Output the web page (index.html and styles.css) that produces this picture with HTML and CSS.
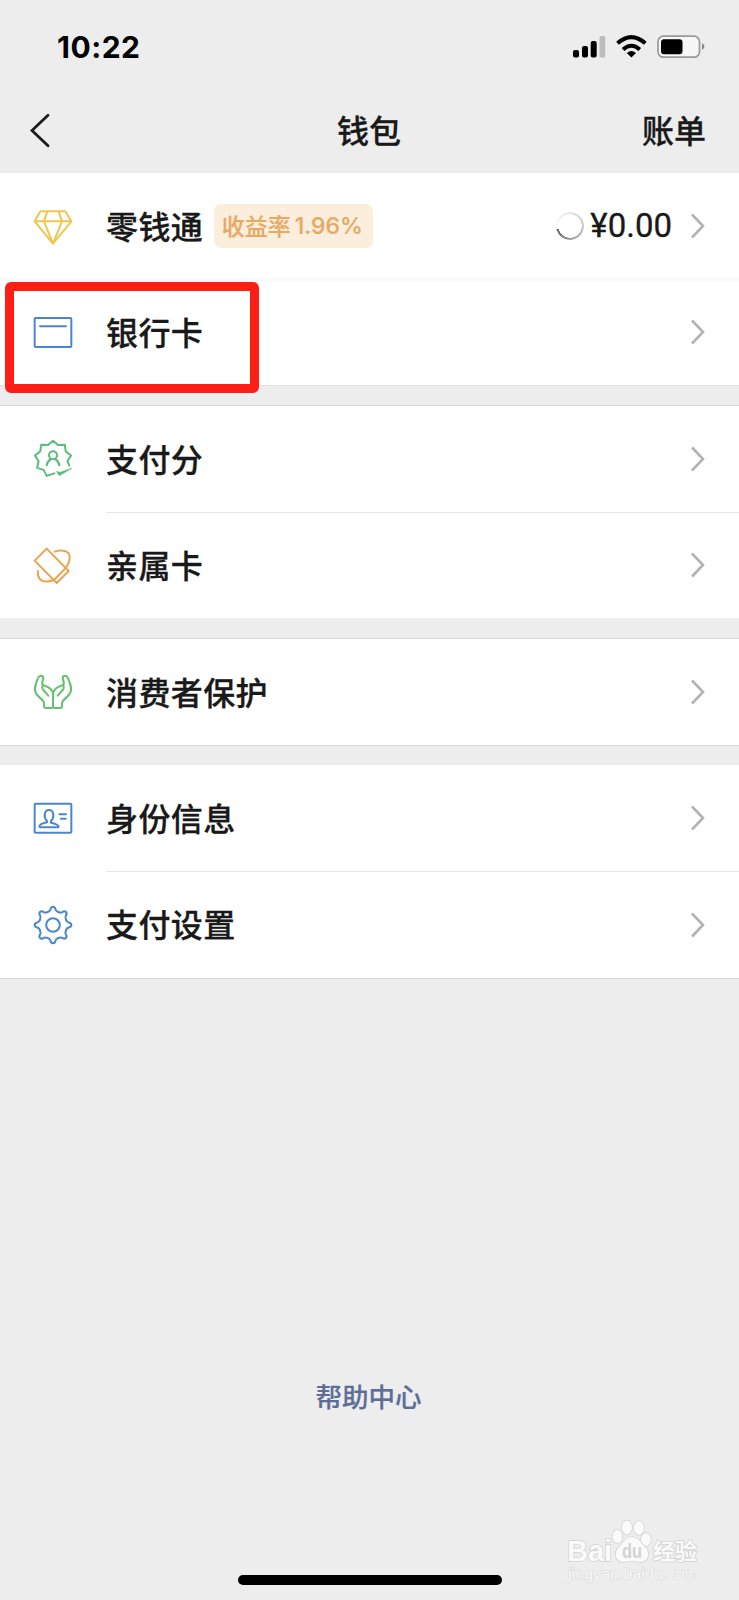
FILE: index.html
```html
<!DOCTYPE html>
<html lang="zh-CN">
<head>
<meta charset="utf-8">
<title>钱包</title>
<link rel="stylesheet" href="styles.css">
</head>
<body>
<svg class="defs" width="0" height="0">
  <symbol id="chevron" viewBox="0 0 16 28"><path d="M2 2.500 L13 14 L2 25.500" fill="none" stroke="#b2b2b2" stroke-width="2.600"/></symbol>
  <path id="tooth" d="M-16.1-38.8C-11.5-40.7-8.5-42-7.5-47C-6.5-53-5-55-0-55C5-55 6.5-53 7.5-47C8.5-42 11.5-40.7 16.1-38.8"/>
  <path id="hand" d="M31 20C31 9 19 9 15 18C8 36 2 49 8 62C13 76 34 82 33 95V103Q33 108 38 108H54Q60 108 60 102V66C60 50 44 45 33 40C26 42 26 48 31 54L46 71M31 20C27 28 26 34 29 42"/>
</svg>
<div class="screen">
  <div class="status">
    <span class="time">10:22</span>
    <svg class="indicators" width="134" height="26" viewBox="0 0 134 26">
      <rect x="0" y="16" width="6" height="7.500" rx="2"/><rect x="9" y="12" width="6" height="11.500" rx="2"/><rect x="17.700" y="7" width="6" height="16.500" rx="2"/><rect x="26.500" y="2" width="5.700" height="21.500" rx="1.500" fill="#bcbcbc"/>
      <g fill="none" stroke="#000" stroke-width="4"><path d="M44.500 9.200Q58.400-3.100 72.300 9.200"/><path d="M50 15.500Q58.400 8 66.800 15.500"/></g>
      <path d="M53.800 19Q58.400 14.800 63 19L58.400 23.500z"/>
      <rect x="85" y="2.200" width="41.500" height="21" rx="5.500" fill="#f7f7f7" stroke="#999" stroke-width="1.700"/><rect x="88" y="5.200" width="21.500" height="15" rx="3"/><path d="M129 9Q134 12.500 129 16z" fill="#888"/>
    </svg>
  </div>
  <header class="nav">
    <svg width="24" height="36" viewBox="0 0 24 36"><path d="M21 2.200L5 17.500L21 32.700" fill="none" stroke="#1c1c1c" stroke-width="2.800" stroke-linecap="round"/></svg>
    <h1 class="title">钱包</h1>
    <span class="bill">账单</span>
  </header>

  <section class="group first">
    <div class="row gold">
      <svg class="icon" viewBox="0 0 120 120"><path d="M22 16H97L115 46L60 113L5 46ZM5 46H115M43 16L33 46L60 113L87 46L77 16"/></svg>
      <span class="label">零钱通</span><span class="badge"><span>收益率</span><span class="rate">1.96%</span></span>
      <span class="amount"><i class="spinner"></i>¥0.00</span>
      <svg class="arrow"><use href="#chevron"/></svg>
    </div>
    <div class="row blue">
      <svg class="icon" viewBox="0 0 120 120"><rect x="5" y="18" width="110" height="87" rx="3"/><path d="M21 43H99"/></svg>
      <span class="label">银行卡</span>
      <svg class="arrow"><use href="#chevron"/></svg>
      <div class="highlight"></div>
    </div>
  </section>

  <section class="group second">
    <div class="row green">
      <svg class="icon" viewBox="0 0 120 120"><path d="M109 80L103.300 66.600L114.200 49.400L98.100 37L95.400 16.900L75 17.700L60 5L45 17.700L24.600 16.900L21.900 37L5.800 49.400L16.700 66.600L12.400 86.500L31.700 92.700L41.200 110.700L64 103"/><circle cx="60" cy="49" r="12"/><path d="M41 79Q43 66 54 60M66 60Q77 66 79 79"/><path d="M71 98L79 110L116 88L82 100Z" fill="#5dbb7c" stroke-width="2"/></svg>
      <span class="label">支付分</span>
      <svg class="arrow"><use href="#chevron"/></svg>
    </div>
    <div class="row orange">
      <svg class="icon" viewBox="0 0 120 120"><path d="M41 11L107 78L71 114L5 47ZM63 105L97 70M65 20C87 13 109 16 110 35Q111 52 98 69M15 78C12 106 30 116 63 105"/></svg>
      <span class="label">亲属卡</span>
      <svg class="arrow"><use href="#chevron"/></svg>
    </div>
  </section>

  <section class="group third">
    <div class="row leaf">
      <svg class="icon" viewBox="0 0 120 120"><use href="#hand"/><use href="#hand" transform="translate(120 0) scale(-1 1)"/></svg>
      <span class="label">消费者保护</span>
      <svg class="arrow"><use href="#chevron"/></svg>
    </div>
  </section>

  <section class="group fourth">
    <div class="row blue">
      <svg class="icon" viewBox="0 0 120 120"><rect x="5" y="17" width="110" height="87" rx="3"/><path d="M42 69C30 57 34 36 48 36C62 36 66 57 54 69V74Q77 79 77 86Q77 88 73 88H23Q19 88 19 85Q20 78 42 73ZM79 49H99M84 62H98"/></svg>
      <span class="label">身份信息</span>
      <svg class="arrow"><use href="#chevron"/></svg>
    </div>
    <div class="row blue">
      <svg class="icon" viewBox="0 0 120 120"><g transform="translate(60 60)"><use href="#tooth"/><use href="#tooth" transform="rotate(45)"/><use href="#tooth" transform="rotate(90)"/><use href="#tooth" transform="rotate(135)"/><use href="#tooth" transform="rotate(180)"/><use href="#tooth" transform="rotate(225)"/><use href="#tooth" transform="rotate(270)"/><use href="#tooth" transform="rotate(315)"/><circle r="20.500"/></g></svg>
      <span class="label">支付设置</span>
      <svg class="arrow"><use href="#chevron"/></svg>
    </div>
  </section>

  <footer class="footer">
    <a class="help">帮助中心</a>
    <div class="home"></div>
  </footer>
  <svg class="watermark" width="140" height="70" viewBox="0 0 140 70">
    <g fill="#fafafa" stroke="#d2d2d2" stroke-width="1.500" paint-order="stroke">
      <text x="0" y="45" class="wm-latin" textLength="45" lengthAdjust="spacingAndGlyphs">Bai</text>
      <ellipse cx="50.500" cy="20.500" rx="5" ry="6.500"/><ellipse cx="60" cy="11.500" rx="5" ry="7"/><ellipse cx="72" cy="12" rx="5" ry="7"/><ellipse cx="79" cy="23.500" rx="5" ry="6.500"/>
      <path d="M65 21C71 21 74 27 78 31C84 37 81 46 73 46Q65 44 57 46C48 46 46 37 52 31C56 27 59 21 65 21Z"/>
      <text x="86" y="43" class="wm-cn">经验</text>
    </g>
    <text x="55" y="42" class="wm-du" textLength="20" lengthAdjust="spacingAndGlyphs">du</text>
    <text x="1" y="63" class="wm-url" textLength="130" lengthAdjust="spacingAndGlyphs">jingyan.baidu.com</text>
  </svg>
</div>
</body>
</html>
```
FILE: styles.css
```css
* { box-sizing: border-box; }
body { margin: 0; background: #ededed; color: #191919; font-family: "Noto Sans CJK SC", sans-serif; }
.defs { position: absolute; }
.screen { position: relative; width: 739px; height: 1600px; display: flex; flex-direction: column; overflow: hidden; }
.status { height: 88px; padding: 34px 32px 0 57px; display: flex; justify-content: space-between; align-items: flex-start; }
.time { font: 700 30px/26px Inter, sans-serif; letter-spacing: .5px; color: #000; }
.nav { height: 85px; padding: 0 33px 4px 27px; display: grid; grid-template-columns: 1fr auto 1fr; align-items: center; }
.nav svg { margin-top: 4px; }
.title, .bill { margin: 0; font-size: 32px; font-weight: 500; line-height: 46px; -webkit-text-stroke: .3px; }
.title { padding-left: 5px; }
.bill { justify-self: end; }
.group { background: #fff; display: flex; flex-direction: column; }
.first { height: 213px; border-bottom: 1px solid #e2e2e2; }
.second { height: 213px; margin-top: 19px; border-top: 1px solid #d8d8d8; }
.third { height: 108px; margin-top: 20px; border-top: 1px solid #d8d8d8; border-bottom: 1px solid #d8d8d8; }
.fourth { height: 214px; margin-top: 19px; border-bottom: 1px solid #d8d8d8; }
.row { position: relative; flex: 1; padding: 0 33px; display: flex; align-items: center; }
.row + .row::before { content: ""; position: absolute; left: 106px; right: 0; top: -1px; height: 1px; background: #e8e8e8; }
.second .row + .row::before { top: 0; }
.first .row + .row::before { background: #fafafa; left: 0; height: 3px; }
.icon { width: 40px; height: 40px; margin-right: 33px; fill: none; stroke: currentColor; stroke-width: 6; stroke-linejoin: round; stroke-linecap: round; }
.gold { color: #ebc851; }
.blue { color: #4a86cf; }
.green { color: #5dbb7c; }
.orange { color: #e8a552; }
.leaf { color: #67bf70; }
.label { padding-bottom: 3px; font-size: 32px; font-weight: 500; line-height: 46px; letter-spacing: .4px; color: #191919; -webkit-text-stroke: .3px; }
.badge { height: 44px; margin-left: 10.500px; padding: 0 10px 0 8px; border-radius: 7px; background: #fbeedd; color: #e6aa64; display: flex; align-items: center; gap: 4px; font-size: 23px; font-weight: 500; line-height: 42px; -webkit-text-stroke: .2px; }
.badge span:first-child { padding-bottom: 2px; }
.rate { font-family: Inter, sans-serif; font-size: 23px; }
.amount { margin-left: auto; margin-right: 18px; display: flex; align-items: center; gap: 6px; color: #191919; font: 400 33px/44px Roboto, sans-serif; -webkit-text-stroke: .3px; }
.spinner { width: 28px; height: 28px; border-radius: 50%; background: conic-gradient(from 257deg, #fff 0deg, #f0f0f0 60deg, #d8d8d8 150deg, #aaa 260deg, #666 360deg); -webkit-mask: radial-gradient(circle, transparent 11.500px, #000 12px); mask: radial-gradient(circle, transparent 11.500px, #000 12px); }
.arrow { width: 16px; height: 28px; margin-left: auto; }
.amount + .arrow { margin-left: 0; }
.highlight { position: absolute; left: 4.500px; top: 3px; width: 254.500px; height: 110.500px; border: 9px solid #ff1e14; border-radius: 6px; z-index: 2; }
.footer { flex: 1; padding: 398px 0 15px; display: flex; flex-direction: column; align-items: center; justify-content: space-between; }
.help { padding-right: 2px; color: #5e6d98; font-size: 26.500px; font-weight: 500; line-height: 38px; -webkit-text-stroke: .2px; }
.home { width: 264px; height: 10px; border-radius: 5px; background: #000; }
.watermark { position: absolute; left: 567px; top: 1516px; }
.wm-latin { font: 700 29px "Liberation Sans", sans-serif; }
.wm-cn { font: 700 22px "Noto Sans CJK SC", sans-serif; }
.wm-du { font: 700 20px "Liberation Sans", sans-serif; fill: #d2d2d2; }
.wm-url { font: 400 14px "Liberation Sans", sans-serif; fill: #f8f8f8; stroke: #dadada; stroke-width: 1px; paint-order: stroke; }
```
